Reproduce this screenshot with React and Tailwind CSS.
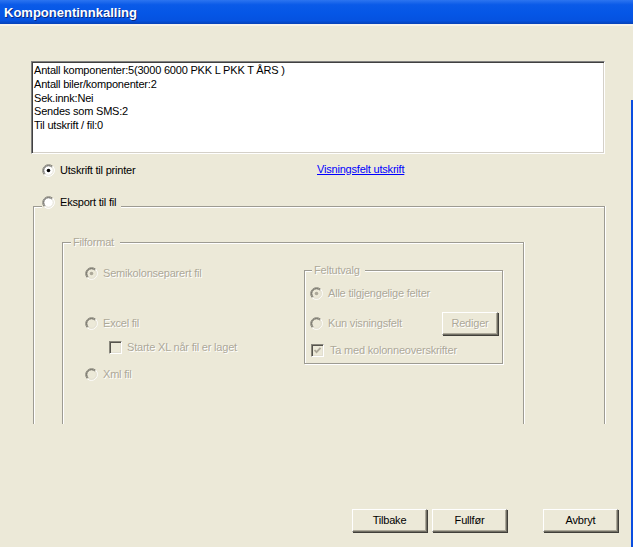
import React from 'react';

const Radio = ({ checked, disabled }) => (
  <svg width="13" height="13" viewBox="0 0 13 13" className="shrink-0">
    <circle cx="6.5" cy="6.5" r="6" fill={disabled ? '#ece9d8' : '#ffffff'} />
    <path d="M2.26 10.74 A6 6 0 0 1 10.74 2.26" stroke="#8a887d" fill="none" />
    <path d="M10.74 2.26 A6 6 0 0 1 2.26 10.74" stroke="#ffffff" fill="none" />
    <path d="M3.1 9.9 A4.8 4.8 0 0 1 9.9 3.1" stroke="#55534c" fill="none" />
    <path d="M9.9 3.1 A4.8 4.8 0 0 1 3.1 9.9" stroke="#e2dfd2" fill="none" />
    {checked && <circle cx="6.5" cy="6.5" r="1.8" fill={disabled ? '#aca899' : '#000000'} />}
  </svg>
);

const Checkbox = ({ checked, disabled }) => (
  <div
    className={`w-[13px] h-[13px] shrink-0 border border-t-[#8a887d] border-l-[#8a887d] border-b-white border-r-white shadow-[inset_1px_1px_0_#55534c,inset_-1px_-1px_0_#e2dfd2] flex items-center justify-center ${
      disabled ? 'bg-[#ece9d8]' : 'bg-white'
    }`}
  >
    {checked && (
      <svg width="9" height="9" viewBox="0 0 9 9">
        <path d="M1.5 4 L3.5 6.2 L7.5 1.8" stroke={disabled ? '#aca899' : '#000'} strokeWidth="1.8" fill="none" />
      </svg>
    )}
  </div>
);

const Label = ({ children, disabled }) => (
  <span
    className={`leading-[13px] whitespace-nowrap ${
      disabled ? 'text-[#aca899] [text-shadow:1px_1px_0_#ffffff]' : 'text-black'
    }`}
  >
    {children}
  </span>
);

const Button = ({ children, className = '', disabled }) => (
  <button
    className={`h-[23px] bg-[#ece9d8] border border-t-white border-l-white border-b-[#716f64] border-r-[#716f64] shadow-[inset_-1px_-1px_0_#aca899,1px_1px_0_#403f3a] flex items-center justify-center leading-none ${
      disabled ? 'text-[#aca899] [text-shadow:1px_1px_0_#ffffff]' : 'text-black'
    } ${className}`}
  >
    {children}
  </button>
);

export default function App() {
  const lines = [
    'Antall komponenter:5(3000 6000 PKK L PKK T ÅRS )',
    'Antall biler/komponenter:2',
    'Sek.innk:Nei',
    'Sendes som SMS:2',
    'Til utskrift / fil:0',
  ];

  return (
    <div className="w-[633px] h-[547px] overflow-hidden bg-[#ece9d8] flex flex-col text-[11px] tracking-[-0.2px] font-['Liberation_Sans',Arial,sans-serif]">
      {/* Title bar */}
      <div className="h-[24px] shrink-0 flex items-center pl-[4px] bg-[linear-gradient(to_bottom,#2c74f0_0%,#0a5ae8_20%,#0556e6_55%,#0552e0_85%,#0642b8_100%)]">
        <span className="text-white font-bold text-[13px] tracking-normal leading-none [text-shadow:1px_1px_0_#0a2a80]">
          Komponentinnkalling
        </span>
      </div>
      <div className="h-[2px] shrink-0 bg-[#f6f2ea]" />

      <div className="flex-1 flex">
        <div className="flex-1 flex flex-col">
          {/* Info box */}
          <div className="ml-[31px] mt-[35px] w-[574px] h-[93px] bg-white border border-t-[#808080] border-l-[#808080] border-b-white border-r-white shadow-[inset_1px_1px_0_#404040,inset_-1px_-1px_0_#d4d0c8] pl-[2px] pt-[2px]">
            {lines.map((l) => (
              <div key={l} className="leading-[13.75px] text-black whitespace-nowrap">
                {l}
              </div>
            ))}
          </div>

          {/* Printer option */}
          <div className="ml-[42px] mt-[10px] h-[13px] flex items-center">
            <div className="w-[275px] flex items-center gap-[5px]">
              <Radio checked />
              <Label>Utskrift til printer</Label>
            </div>
            <a className="text-[#0000ff] underline leading-[13px] -mt-[2px] cursor-pointer">Visningsfelt utskrift</a>
          </div>

          {/* Export group */}
          <div className="ml-[33px] mt-[29px] w-[572px] h-[218px] border border-b-0 border-[#9d9b92] shadow-[inset_1px_1px_0_#ffffff,1px_0_0_#ffffff] flex flex-col">
            <div className="-mt-[11px] ml-[8px] w-fit pr-[5px] bg-[#ece9d8] h-[13px] flex items-center gap-[5px]">
              <Radio />
              <Label>Eksport til fil</Label>
            </div>

            {/* Filformat */}
            <div className="ml-[28px] mt-[33px] w-[462px] h-[182px] border border-b-0 border-[#9d9b92] shadow-[inset_1px_1px_0_#ffffff,1px_0_0_#ffffff] flex flex-col">
              <div className="-mt-[7px] ml-[8px] w-fit pl-[2px] pr-[6px] bg-[#ece9d8] h-[13px] flex items-center">
                <Label disabled>Filformat</Label>
              </div>

              <div className="flex pl-[22px]">
                <div className="w-[219px] pt-[18px] flex flex-col">
                  <div className="h-[13px] flex items-center gap-[5px]">
                    <Radio checked disabled />
                    <Label disabled>Semikolonseparert fil</Label>
                  </div>
                  <div className="mt-[37px] h-[13px] flex items-center gap-[5px]">
                    <Radio disabled />
                    <Label disabled>Excel fil</Label>
                  </div>
                  <div className="mt-[11px] ml-[24px] h-[13px] flex items-center gap-[5px]">
                    <Checkbox disabled />
                    <Label disabled>Starte XL når fil er laget</Label>
                  </div>
                  <div className="mt-[14px] h-[13px] flex items-center gap-[5px]">
                    <Radio disabled />
                    <Label disabled>Xml fil</Label>
                  </div>
                </div>

                {/* Feltutvalg */}
                <div className="mt-[21px] w-[199px] h-[94px] border border-[#9d9b92] shadow-[inset_1px_1px_0_#ffffff,1px_1px_0_#ffffff] flex flex-col">
                  <div className="-mt-[7px] ml-[7px] w-fit pl-[2px] pr-[5px] bg-[#ece9d8] h-[13px] flex items-center">
                    <Label disabled>Feltutvalg</Label>
                  </div>
                  <div className="ml-[5px] mt-[10px] h-[13px] flex items-center gap-[5px]">
                    <Radio checked disabled />
                    <Label disabled>Alle tilgjengelige felter</Label>
                  </div>
                  <div className="ml-[5px] mr-[4px] mt-[12px] h-[23px] flex items-center gap-[5px]">
                    <Radio disabled />
                    <Label disabled>Kun visningsfelt</Label>
                    <Button disabled className="ml-auto w-[56px]">Rediger</Button>
                  </div>
                  <div className="ml-[6px] mt-[9px] h-[13px] flex items-center gap-[6px]">
                    <Checkbox checked disabled />
                    <Label disabled>Ta med kolonneoverskrifter</Label>
                  </div>
                </div>
              </div>
            </div>
          </div>

          {/* Bottom buttons */}
          <div className="mt-auto mb-[15px] mr-[13px] flex justify-end">
            <Button className="w-[75px]">Tilbake</Button>
            <Button className="w-[75px] ml-[5px]">Fullfør</Button>
            <Button className="w-[75px] ml-[36px]">Avbryt</Button>
          </div>
        </div>

        {/* window edge */}
        <div className="w-[2px] flex flex-col">
          <div className="h-[74px]" />
          <div className="flex-1 bg-[#0a4ee0]" />
        </div>
      </div>
    </div>
  );
}
